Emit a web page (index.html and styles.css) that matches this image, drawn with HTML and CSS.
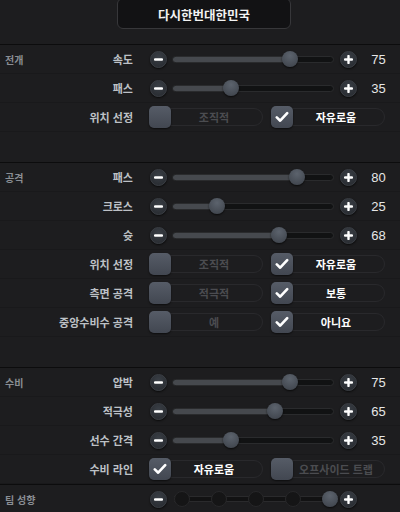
FILE: index.html
```html
<!DOCTYPE html>
<html lang="ko">
<head>
    <meta charset="UTF-8">
    <meta name="viewport" content="width=device-width, initial-scale=1.0">
    <title>전술 설정</title>
    <link rel="stylesheet" href="styles.css">
</head>
<body>
    <div class="title-bar">
        <div class="title-box">다시한번대한민국</div>
    </div>

    <!-- 전개 -->
    <section class="group">
        <div class="row">
            <span class="sec">전개</span>
            <span class="label">속도</span>
            <div class="btn"><svg width="9" height="9" viewBox="0 0 9 9"><path d="M1 4.5h7" stroke="#fff" stroke-width="2.4" stroke-linecap="round"/></svg></div>
            <div class="track"><div class="fill" style="width:116.5px"></div><div class="knob"></div></div>
            <div class="btn"><svg width="9" height="9" viewBox="0 0 9 9"><path d="M1 4.5h7M4.5 1v7" stroke="#fff" stroke-width="2.4" stroke-linecap="round"/></svg></div>
            <span class="value">75</span>
        </div>
        <div class="row">
            <span class="sec"></span>
            <span class="label">패스</span>
            <div class="btn"><svg width="9" height="9" viewBox="0 0 9 9"><path d="M1 4.5h7" stroke="#fff" stroke-width="2.4" stroke-linecap="round"/></svg></div>
            <div class="track"><div class="fill" style="width:58.1px"></div><div class="knob"></div></div>
            <div class="btn"><svg width="9" height="9" viewBox="0 0 9 9"><path d="M1 4.5h7M4.5 1v7" stroke="#fff" stroke-width="2.4" stroke-linecap="round"/></svg></div>
            <span class="value">35</span>
        </div>
        <div class="row">
            <span class="sec"></span>
            <span class="label">위치 선정</span>
            <div class="choices">
                <div class="choice"><span class="box"></span><span class="opt">조직적</span></div>
                <div class="choice on"><span class="box"><svg width="14" height="12" viewBox="0 0 14 12"><path d="M1.8 6.4l3.4 3.3 7-7.6" fill="none" stroke="#fff" stroke-width="2.6" stroke-linecap="round" stroke-linejoin="round"/></svg></span><span class="opt">자유로움</span></div>
            </div>
        </div>
    </section>

    <!-- 공격 -->
    <section class="group">
        <div class="row">
            <span class="sec">공격</span>
            <span class="label">패스</span>
            <div class="btn"><svg width="9" height="9" viewBox="0 0 9 9"><path d="M1 4.5h7" stroke="#fff" stroke-width="2.4" stroke-linecap="round"/></svg></div>
            <div class="track"><div class="fill" style="width:123.8px"></div><div class="knob"></div></div>
            <div class="btn"><svg width="9" height="9" viewBox="0 0 9 9"><path d="M1 4.5h7M4.5 1v7" stroke="#fff" stroke-width="2.4" stroke-linecap="round"/></svg></div>
            <span class="value">80</span>
        </div>
        <div class="row">
            <span class="sec"></span>
            <span class="label">크로스</span>
            <div class="btn"><svg width="9" height="9" viewBox="0 0 9 9"><path d="M1 4.5h7" stroke="#fff" stroke-width="2.4" stroke-linecap="round"/></svg></div>
            <div class="track"><div class="fill" style="width:43.5px"></div><div class="knob"></div></div>
            <div class="btn"><svg width="9" height="9" viewBox="0 0 9 9"><path d="M1 4.5h7M4.5 1v7" stroke="#fff" stroke-width="2.4" stroke-linecap="round"/></svg></div>
            <span class="value">25</span>
        </div>
        <div class="row">
            <span class="sec"></span>
            <span class="label">슛</span>
            <div class="btn"><svg width="9" height="9" viewBox="0 0 9 9"><path d="M1 4.5h7" stroke="#fff" stroke-width="2.4" stroke-linecap="round"/></svg></div>
            <div class="track"><div class="fill" style="width:106.3px"></div><div class="knob"></div></div>
            <div class="btn"><svg width="9" height="9" viewBox="0 0 9 9"><path d="M1 4.5h7M4.5 1v7" stroke="#fff" stroke-width="2.4" stroke-linecap="round"/></svg></div>
            <span class="value">68</span>
        </div>
        <div class="row">
            <span class="sec"></span>
            <span class="label">위치 선정</span>
            <div class="choices">
                <div class="choice"><span class="box"></span><span class="opt">조직적</span></div>
                <div class="choice on"><span class="box"><svg width="14" height="12" viewBox="0 0 14 12"><path d="M1.8 6.4l3.4 3.3 7-7.6" fill="none" stroke="#fff" stroke-width="2.6" stroke-linecap="round" stroke-linejoin="round"/></svg></span><span class="opt">자유로움</span></div>
            </div>
        </div>
        <div class="row">
            <span class="sec"></span>
            <span class="label">측면 공격</span>
            <div class="choices">
                <div class="choice"><span class="box"></span><span class="opt">적극적</span></div>
                <div class="choice on"><span class="box"><svg width="14" height="12" viewBox="0 0 14 12"><path d="M1.8 6.4l3.4 3.3 7-7.6" fill="none" stroke="#fff" stroke-width="2.6" stroke-linecap="round" stroke-linejoin="round"/></svg></span><span class="opt">보통</span></div>
            </div>
        </div>
        <div class="row">
            <span class="sec"></span>
            <span class="label">중앙수비수 공격</span>
            <div class="choices">
                <div class="choice"><span class="box"></span><span class="opt">예</span></div>
                <div class="choice on"><span class="box"><svg width="14" height="12" viewBox="0 0 14 12"><path d="M1.8 6.4l3.4 3.3 7-7.6" fill="none" stroke="#fff" stroke-width="2.6" stroke-linecap="round" stroke-linejoin="round"/></svg></span><span class="opt">아니요</span></div>
            </div>
        </div>
    </section>

    <!-- 수비 -->
    <section class="group tight">
        <div class="row">
            <span class="sec">수비</span>
            <span class="label">압박</span>
            <div class="btn"><svg width="9" height="9" viewBox="0 0 9 9"><path d="M1 4.5h7" stroke="#fff" stroke-width="2.4" stroke-linecap="round"/></svg></div>
            <div class="track"><div class="fill" style="width:116.5px"></div><div class="knob"></div></div>
            <div class="btn"><svg width="9" height="9" viewBox="0 0 9 9"><path d="M1 4.5h7M4.5 1v7" stroke="#fff" stroke-width="2.4" stroke-linecap="round"/></svg></div>
            <span class="value">75</span>
        </div>
        <div class="row">
            <span class="sec"></span>
            <span class="label">적극성</span>
            <div class="btn"><svg width="9" height="9" viewBox="0 0 9 9"><path d="M1 4.5h7" stroke="#fff" stroke-width="2.4" stroke-linecap="round"/></svg></div>
            <div class="track"><div class="fill" style="width:101.9px"></div><div class="knob"></div></div>
            <div class="btn"><svg width="9" height="9" viewBox="0 0 9 9"><path d="M1 4.5h7M4.5 1v7" stroke="#fff" stroke-width="2.4" stroke-linecap="round"/></svg></div>
            <span class="value">65</span>
        </div>
        <div class="row">
            <span class="sec"></span>
            <span class="label">선수 간격</span>
            <div class="btn"><svg width="9" height="9" viewBox="0 0 9 9"><path d="M1 4.5h7" stroke="#fff" stroke-width="2.4" stroke-linecap="round"/></svg></div>
            <div class="track"><div class="fill" style="width:58.1px"></div><div class="knob"></div></div>
            <div class="btn"><svg width="9" height="9" viewBox="0 0 9 9"><path d="M1 4.5h7M4.5 1v7" stroke="#fff" stroke-width="2.4" stroke-linecap="round"/></svg></div>
            <span class="value">35</span>
        </div>
        <div class="row">
            <span class="sec"></span>
            <span class="label">수비 라인</span>
            <div class="choices">
                <div class="choice on"><span class="box"><svg width="14" height="12" viewBox="0 0 14 12"><path d="M1.8 6.4l3.4 3.3 7-7.6" fill="none" stroke="#fff" stroke-width="2.6" stroke-linecap="round" stroke-linejoin="round"/></svg></span><span class="opt">자유로움</span></div>
                <div class="choice"><span class="box"></span><span class="opt">오프사이드 트랩</span></div>
            </div>
        </div>
    </section>

    <!-- 팀 성향 -->
    <section class="group tight">
        <div class="row">
            <span class="sec">팀 성향</span>
            <span class="label"></span>
            <div class="btn"><svg width="9" height="9" viewBox="0 0 9 9"><path d="M1 4.5h7" stroke="#fff" stroke-width="2.4" stroke-linecap="round"/></svg></div>
            <div class="steps">
                <span class="notch"></span>
                <span class="notch"></span>
                <span class="notch"></span>
                <span class="notch"></span>
                <span class="knob"></span>
            </div>
            <div class="btn"><svg width="9" height="9" viewBox="0 0 9 9"><path d="M1 4.5h7M4.5 1v7" stroke="#fff" stroke-width="2.4" stroke-linecap="round"/></svg></div>
        </div>
    </section>
</body>
</html>
```

FILE: styles.css
```css
* {
    box-sizing: border-box;
}
body {
    margin: 0;
    width: 400px;
    height: 512px;
    overflow: hidden;
    background-color: #1d1d1f;
    color: #c0c4c9;
    font-family: "Noto Sans CJK KR", "Liberation Sans", sans-serif;
}
.title-bar {
    height: 46px;
    padding-left: 117px;
}
.title-box {
    width: 174px;
    height: 31px;
    margin-top: -2px;
    background-color: #121214;
    border: 1px solid #37373a;
    border-radius: 6px;
    text-align: center;
    line-height: 31px;
    font-size: 12.5px;
    font-weight: 700;
    color: #f2f2f2;
}
.group {
    border-top: 1px solid #0c0c0d;
    padding-bottom: 30px;
}
.group.tight {
    padding-bottom: 0;
}
.row {
    display: flex;
    align-items: center;
    height: 29px;
    border-bottom: 1px solid #19191b;
}
.sec {
    width: 45px;
    padding-left: 5px;
    font-size: 10px;
    font-weight: 700;
    color: #8a8e94;
    white-space: nowrap;
}
.label {
    width: 88px;
    margin-right: 17px;
    text-align: right;
    font-size: 11px;
    font-weight: 700;
    color: #bdc1c6;
    white-space: nowrap;
}
.btn {
    flex: none;
    width: 17px;
    height: 17px;
    border-radius: 50%;
    background: radial-gradient(circle at 50% 35%, #3a3f46, #25282d);
    border: 1px solid #3a3e44;
    box-shadow: 0 1px 2px rgba(0,0,0,0.7);
    display: flex;
    align-items: center;
    justify-content: center;
}
.btn svg {
    display: block;
}
.track {
    flex: none;
    width: 162px;
    height: 7px;
    margin: 0 6px 0 5px;
    background-color: #111213;
    border: 1px solid #2a2b2d;
    border-radius: 4px;
    display: flex;
    align-items: center;
}
.fill {
    height: 5px;
    background-color: #46494e;
    border-radius: 3px 0 0 3px;
}
.knob {
    flex: none;
    width: 16px;
    height: 16px;
    margin-left: -8px;
    border-radius: 50%;
    background: radial-gradient(circle at 50% 30%, #5c636d, #3b4048);
    box-shadow: 0 1px 2px rgba(0,0,0,0.7);
}
.value {
    width: 43px;
    text-align: center;
    font-family: "Liberation Sans", Arial, sans-serif;
    font-size: 13px;
    color: #e6e6e6;
}
.choices {
    display: flex;
    gap: 8px;
    margin-left: -1px;
}
.choice {
    width: 114px;
    height: 18px;
    border: 1px solid #29292c;
    border-radius: 9px;
    display: flex;
    align-items: center;
}
.box {
    flex: none;
    width: 22px;
    height: 22px;
    margin-left: -1px;
    border-radius: 5px;
    background: linear-gradient(#565c67, #424751);
    box-shadow: 0 1px 2px rgba(0,0,0,0.6);
    display: flex;
    align-items: center;
    justify-content: center;
}
.opt {
    flex: 1;
    padding-right: 5px;
    text-align: center;
    font-size: 11px;
    font-weight: 700;
    color: #4b4c50;
    white-space: nowrap;
}
.choice.on .opt {
    color: #ffffff;
}
.steps {
    flex: none;
    width: 164px;
    height: 16px;
    margin: 0 2px 0 7px;
    display: flex;
    justify-content: space-between;
    align-items: center;
    background: linear-gradient(to bottom, transparent 5px, #2a2a2c 5px, #2a2a2c 6px, #121213 6px, #121213 10px, #2a2a2c 10px, #2a2a2c 11px, transparent 11px);
}
.notch {
    width: 16px;
    height: 16px;
    border-radius: 50%;
    background-color: #151516;
    border: 1px solid #272729;
}
.steps .knob {
    margin-left: 0;
}
```
